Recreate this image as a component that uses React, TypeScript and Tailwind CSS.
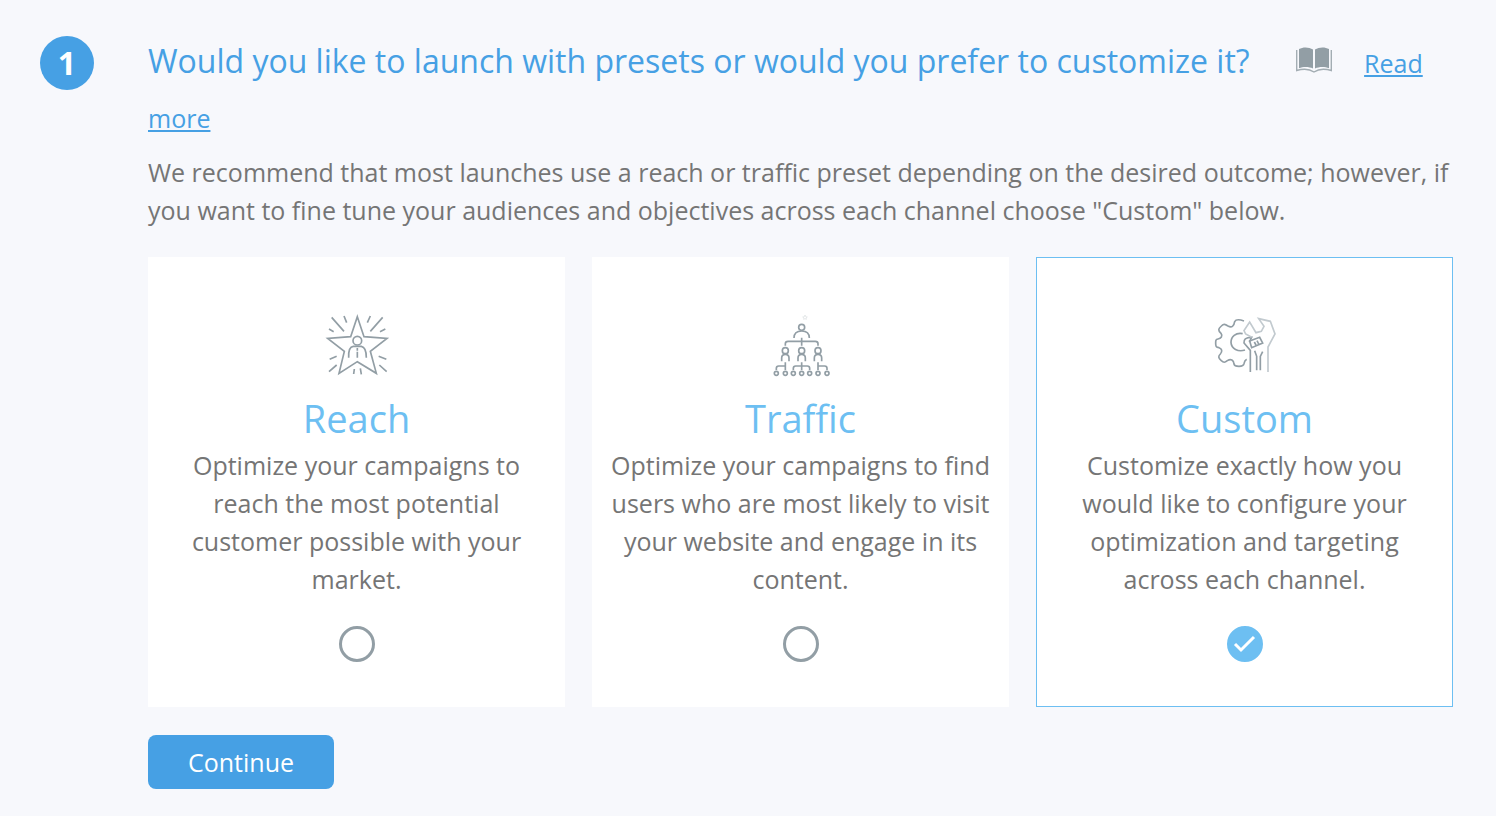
import React, { useState } from 'react'

function BookIcon() {
  return (
    <svg className="inline-block h-[26px] w-9 align-baseline" viewBox="0 0 36 26" fill="none" aria-hidden="true">
      <path d="M3 2C7-.2 13-.2 17 2.6V21.500C13 19.500 7 19.500 3 21.300Z" fill="#929ea5" />
      <path d="M33 2C29-.2 23-.2 19 2.6V21.500C23 19.500 29 19.500 33 21.300Z" fill="#929ea5" />
      <path d="M.7 3V23.500C7 21.600 13 21.500 18 25C23 21.500 29 21.600 35.300 23.500V3" stroke="#a3adb3" strokeWidth="1.4" />
    </svg>
  )
}

function ReachIcon() {
  return (
    <svg className="size-20" viewBox="0 0 240 240" fill="none" stroke="#929ea5" strokeWidth="5" aria-hidden="true">
      <path d="M121 32L141 92L210 97L160 136L178 202L121 167L66 202L82 136L32 97L101 92Z" />
      <circle cx="121" cy="104" r="13" />
      <path d="M95 155C94 134 99 122 109 121H133C144 123 148 134 148 155M121 126V134M121 137V155" />
      <path d="M44 34L81 76M81 30L89 50M160 30L151 50M197 34L160 76M36 69L50 77M205 69L189 77" />
      <path d="M38 160L59 151M36 197L59 177M110 204L112 189M133 205L130 187M209 197L187 177M208 160L185 151" />
    </svg>
  )
}

function TrafficIcon() {
  return (
    <svg className="size-20" viewBox="0 0 240 240" fill="none" stroke="#929ea5" strokeWidth="5" aria-hidden="true">
      <path d="M132 27L134 32L139 33L135 36L136 40L132 38L128 40L129 36L125 33L130 32Z" stroke="#d9dee0" strokeWidth="2" />
      <circle cx="122" cy="64" r="9" />
      <path d="M99 96C99 81 106 75 122 75C138 75 145 81 145 96M122 95V119M73 119V113Q73 106 81 106H163Q171 106 171 113V119" />
      {[73, 122, 171].map((x) => (
        <g key={x}>
          <circle cx={x} cy="134" r="9" />
          <path d={`M${x - 11} 166V156Q${x - 11} 145 ${x} 145Q${x + 11} 145 ${x + 11} 156V166`} />
        </g>
      ))}
      <path d="M73 169V192M46 192V187Q46 180 53 180H73M122 169V192M97 192V187Q97 180 104 180H139Q146 180 146 187V192M171 169V192M171 180H191Q198 180 198 187V192" />
      {[46, 73, 97, 122, 146, 171, 198].map((x) => (
        <circle key={x} cx={x} cy="202" r="6" />
      ))}
    </svg>
  )
}

function CustomIcon() {
  return (
    <svg className="size-20" viewBox="0 0 240 240" fill="none" stroke="#929ea5" strokeWidth="5" aria-hidden="true">
      <path d="M117 45C103 40 92 41 89 47C87 61 80 66 69 60C60 54 56 53 49 60C39 69 39 74 48 82C54 90 48 98 39 99C32 100 32 104 32 112C32 121 33 124 42 125C51 128 53 136 46 144C39 151 40 156 48 163C56 171 60 170 67 164C78 157 86 162 87 174C88 180 93 181 102 181C111 181 116 179 117 173C118 166 121 162 125 160" />
      <path d="M113 83C92 79 78 92 78 109C79 128 99 139 120 132" />
      <path d="M136 198V133L117 111C116 101 121 94 140 94L133 108M149 134L155 151V193M173 137L166 151V193" />
      <path d="M134 105L164 94L173 111L140 125ZM148 108L153 117M156 104L161 114" />
      <path d="M189 198V123L210 84L196 46L161 38L177 61L169 76L153 80L134 48L117 74L122 84L140 94" stroke="#c2cacf" />
    </svg>
  )
}

const presets = [
  {
    id: 'reach',
    title: 'Reach',
    description: 'Optimize your campaigns to reach the most potential customer possible with your market.',
    icon: ReachIcon,
  },
  {
    id: 'traffic',
    title: 'Traffic',
    description: 'Optimize your campaigns to find users who are most likely to visit your website and engage in its content.',
    icon: TrafficIcon,
  },
  {
    id: 'custom',
    title: 'Custom',
    description: 'Customize exactly how you would like to configure your optimization and targeting across each channel.',
    icon: CustomIcon,
  },
]

export default function App() {
  const [selected, setSelected] = useState('custom')

  return (
    <main className="flex min-h-screen items-start gap-[54px] bg-[#f7f8fc] pt-[33px] pr-4 pb-6 pl-10 font-['Open_Sans',sans-serif] text-[25px] leading-[38px] text-[#757575]">
      <div className="mt-[3px] flex size-[54px] shrink-0 items-center justify-center rounded-full bg-[#46a0e4] text-[32px] font-bold text-white">
        1
      </div>

      <section className="min-w-0 flex-1">
        <div className="leading-[55px] text-[#46a0e4]">
          <h1 className="mr-10 inline text-[32px]">
            Would you like to launch with presets or would you prefer to customize it?
          </h1>{' '}
          <BookIcon />
          <a href="#" className="ml-8 underline">
            Read more
          </a>
        </div>
        <p className="mt-[7px]">
          We recommend that most launches use a reach or traffic preset depending on the desired outcome; however, if
          you want to fine tune your audiences and objectives across each channel choose "Custom" below.
        </p>

        {/* Preset cards */}
        <div className="mt-7 mr-[27px] grid grid-cols-3 gap-[27px]">
          {presets.map((preset) => {
            const Icon = preset.icon
            const isSelected = selected === preset.id

            return (
              <label
                key={preset.id}
                htmlFor={preset.id}
                className={`flex cursor-pointer flex-col items-center border bg-white px-4 pt-12 pb-11 text-center ${
                  isSelected ? 'border-[#6dbff2]' : 'border-white'
                }`}
              >
                <Icon />
                <span className="mt-1 text-[38px] leading-[56px] text-[#6dbff2]">{preset.title}</span>
                <span>{preset.description}</span>
                <span className="relative mt-7 flex">
                  <input
                    type="radio"
                    id={preset.id}
                    name="preset"
                    checked={isSelected}
                    onChange={() => setSelected(preset.id)}
                    className="size-9 appearance-none rounded-full border-3 border-[#929ea5] checked:border-[#6dbff2] checked:bg-[#6dbff2]"
                  />
                  {isSelected && (
                    <svg
                      className="pointer-events-none absolute inset-0 size-9"
                      viewBox="0 0 36 36"
                      fill="none"
                      stroke="white"
                      strokeWidth="3"
                    >
                      <path d="M8 18L14 24L27 11" />
                    </svg>
                  )}
                </span>
              </label>
            )
          })}
        </div>

        <button type="button" className="mt-7 h-[54px] rounded-lg bg-[#46a0e4] px-10 text-white">
          Continue
        </button>
      </section>
    </main>
  )
}
